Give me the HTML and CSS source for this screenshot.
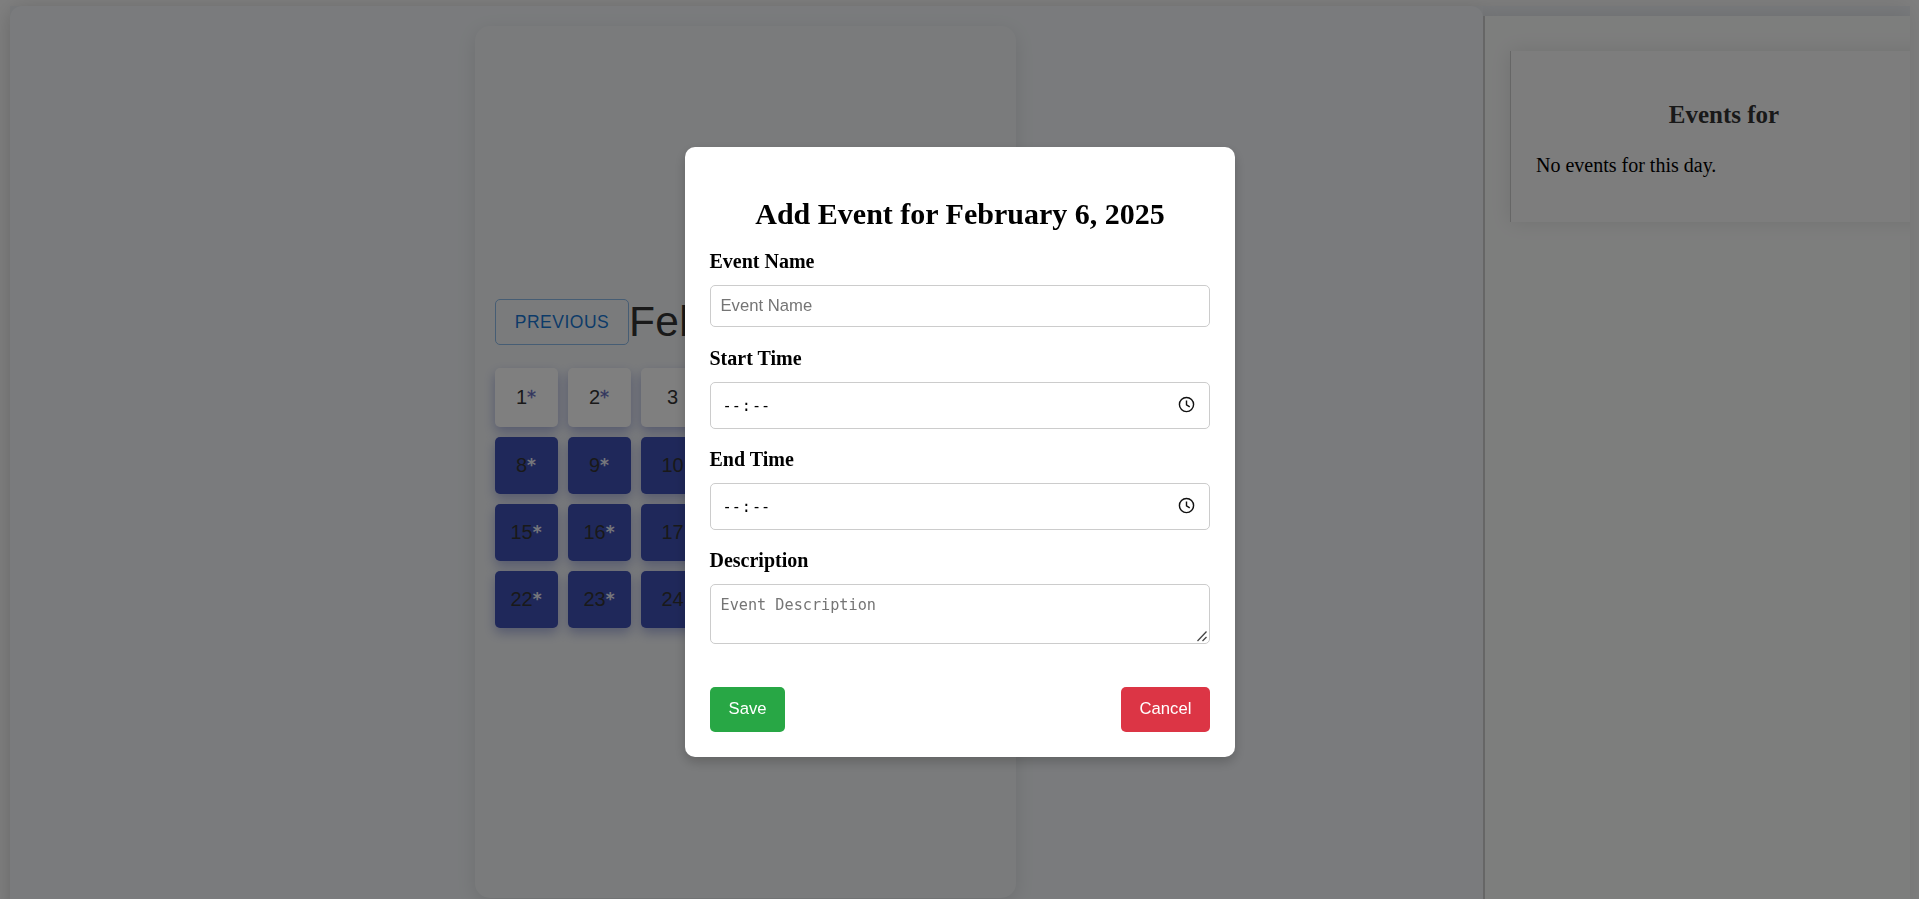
FILE: index.html
```
<!DOCTYPE html>
<html lang="en">
<head>
<meta charset="utf-8">
<title>Calendar</title>
<link rel="stylesheet" href="styles.css">
</head>
<body>
<div class="app">
  <main class="calendar-pane">
    <section class="calendar">
      <header class="calendar-head">
        <button class="nav-button">PREVIOUS</button>
        <h1 class="month">February 2025</h1>
      </header>
      <div class="days">
        <div class="day plain">1<b>*</b></div><div class="day plain">2<b>*</b></div><div class="day plain">3</div><div class="day plain">4</div><div class="day plain">5</div><div class="day plain">6</div><div class="day plain">7</div>
        <div class="day">8<b>*</b></div><div class="day">9<b>*</b></div><div class="day">10</div><div class="day">11</div><div class="day">12</div><div class="day">13</div><div class="day">14</div>
        <div class="day">15<b>*</b></div><div class="day">16<b>*</b></div><div class="day">17</div><div class="day">18</div><div class="day">19</div><div class="day">20</div><div class="day">21</div>
        <div class="day">22<b>*</b></div><div class="day">23<b>*</b></div><div class="day">24</div><div class="day">25</div><div class="day">26</div><div class="day">27</div><div class="day">28</div>
      </div>
    </section>
  </main>
  <aside class="side">
    <section class="events">
      <h2 class="events-title">Events for</h2>
      <p class="events-empty">No events for this day.</p>
    </section>
  </aside>
</div>
<div class="overlay">
  <form class="modal">
    <h2 class="modal-title">Add Event for February 6, 2025</h2>
    <label class="label">Event Name</label>
    <input class="field" type="text" placeholder="Event Name">
    <label class="label">Start Time</label>
    <div class="field time"><span class="digits"><i>--</i><i>:</i><i>--</i></span>
      <svg class="clock" viewBox="0 0 24 24"><circle cx="12" cy="12" r="10"/><path d="M12 6.5v6l4.6 2.8"/></svg></div>
    <label class="label">End Time</label>
    <div class="field time"><span class="digits"><i>--</i><i>:</i><i>--</i></span>
      <svg class="clock" viewBox="0 0 24 24"><circle cx="12" cy="12" r="10"/><path d="M12 6.5v6l4.6 2.8"/></svg></div>
    <label class="label">Description</label>
    <div class="area"><span>Event Description</span>
      <svg class="grip" viewBox="0 0 12 12"><path d="M1.5 11 10.5 1.5M6.5 11l4-4"/></svg></div>
    <div class="actions">
      <button class="action save" type="button">Save</button>
      <button class="action cancel" type="button">Cancel</button>
    </div>
  </form>
</div>
</body>
</html>
```

FILE: styles.css
```
* { box-sizing: border-box; }
body { margin: 0; height: 899px; overflow: hidden; background: #fff; font-family: "Liberation Serif", "Times New Roman", serif; font-size: 20px; }
.app { display: flex; height: 910px; margin: 6px 9px 0 10px; background: #f0f3f7; box-shadow: 0 0 25px rgba(0,0,0,.1); }
.calendar-pane { position: relative; flex: none; width: 1473px; padding-top: 20px; padding-left: 465px; background: #f4f7fa; border-radius: 12px; box-shadow: 0 5px 19px rgba(0,0,0,.1); }
.calendar { display: flex; flex-direction: column; width: 541px; height: 872px; padding: 273px 20px 0; border-radius: 15px; background: #f5f7f9; box-shadow: 0 5px 19px rgba(0,0,0,.1); font-family: "Liberation Sans", Arial, sans-serif; }
.calendar-head { display: flex; align-items: center; height: 46px; white-space: nowrap; }
.nav-button { flex: none; width: 134px; height: 46px; padding: 0; border: 1px solid #8cbae8; border-radius: 5px; background: none; color: #1976d2; font: 17.5px "Liberation Sans", Arial, sans-serif; letter-spacing: .5px; }
.month { margin: 0; color: #333; font-size: 42.5px; font-weight: 400; line-height: 44px; padding-bottom: 1px; letter-spacing: .3px; }
.days { display: grid; grid-template-columns: repeat(7, 63px); grid-template-rows: 59px repeat(3, 57px); gap: 10px; margin-top: 23px; }
.day { display: flex; align-items: center; justify-content: center; padding-bottom: 1px; border-radius: 5px; background: #3f51b5; color: #333; font-size: 20px; box-shadow: 0 5px 12px rgba(63,81,181,.4); }
.day.plain { background: #fff; }
.day b { width: 10px; padding-bottom: 1px; color: #eceef8; font-family: "DejaVu Sans", sans-serif; font-size: 17px; line-height: 20px; }
.day.plain b { color: #666cbd; font-size: 18px; font-weight: 400; -webkit-text-stroke: .3px #666cbd; }
.side { position: relative; flex: 1; min-width: 0; margin-top: 10px; padding: 35px 0 0 25px; border-left: 2px solid #ccc; background: #fbfcfb; box-shadow: 0 0 19px rgba(0,0,0,.1); clip-path: inset(-10px 0 0 0); }
.events { width: 427px; height: 171px; padding: 49px 25px 0; border-left: 1px solid #ccc; background: #fbfbfb; box-shadow: 0 0 19px rgba(0,0,0,.1); }
.events-title { margin: 0; color: #333; font-size: 25px; line-height: 29px; text-align: center; }
.events-empty { margin: 25px 0 0; line-height: 23px; }
.overlay { position: fixed; inset: 0; display: flex; justify-content: center; align-items: flex-start; padding-top: 147px; background: rgba(0,0,0,.5); }
.modal { display: flex; flex-direction: column; width: 550px; height: 610px; padding: 50px 25px 25px; border-radius: 10px; background: #fff; box-shadow: 0 5px 12px rgba(0,0,0,.2); }
.modal-title { margin: 0 0 12px; padding-left: 1px; font-size: 30px; line-height: 34px; text-align: center; }
.label { height: 42px; padding-top: 7px; font-weight: 700; line-height: 23px; }
.field { width: 100%; height: 42px; margin-bottom: 13px; padding: 0 10px; border: 1px solid #ccc; border-radius: 5px; font: 16.67px "Liberation Sans", Arial, sans-serif; }
.field::placeholder { color: #757575; opacity: 1; }
.time { display: flex; align-items: center; justify-content: space-between; height: 47px; margin-bottom: 12px; padding-right: 14px; }
.digits { display: flex; gap: 1px; padding-left: 2px; font: 15.2px "DejaVu Sans Mono", monospace; }
.digits i { font-style: normal; }
.clock { width: 17px; height: 17px; margin-bottom: 2px; fill: none; stroke: #111; stroke-width: 2; }
.area { position: relative; height: 60px; padding: 10px; border: 1px solid #ccc; border-radius: 5px; color: #757575; font: 15.2px/20px "DejaVu Sans Mono", monospace; }
.grip { position: absolute; right: 1px; bottom: 1px; width: 12px; height: 12px; fill: none; stroke: #444; stroke-width: 1.3; }
.actions { display: flex; justify-content: space-between; margin-top: auto; }
.action { height: 45px; padding: 0 0 2px 1px; border: 0; border-radius: 5px; color: #fff; font: 16.67px "Liberation Sans", Arial, sans-serif; }
.save { width: 75px; background: #28a745; }
.cancel { width: 89px; background: #dc3545; }
```
